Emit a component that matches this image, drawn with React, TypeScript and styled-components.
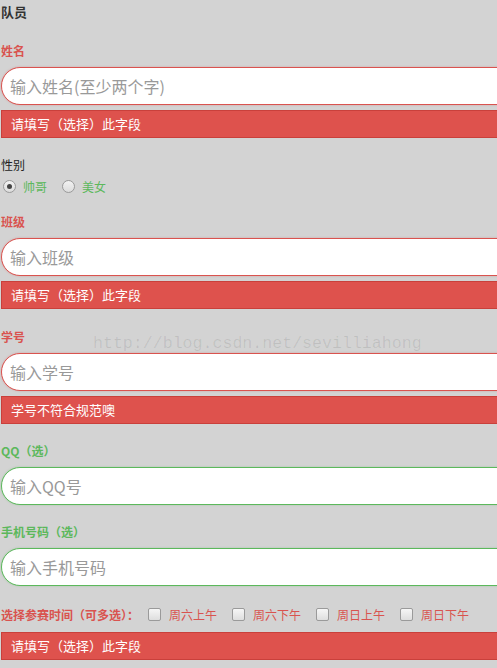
import React from "react"
import styled, { createGlobalStyle } from "styled-components"

const GlobalStyle = createGlobalStyle`
  html, body {
    margin: 0;
    padding: 0;
    background: #d3d3d3;
    overflow: hidden;
  }
  body {
    font-family: "Noto Sans CJK SC", "Noto Sans", sans-serif;
  }
`

const RED = "#d9534f"
const GREEN = "#5cb85c"

const Page = styled.div`
  position: relative;
  width: 497px;
  height: 668px;
  padding-left: 1px;
  box-sizing: border-box;
  overflow: hidden;
`

const Title = styled.div`
  margin-top: 3px;
  height: 18px;
  line-height: 18px;
  font-size: 13px;
  font-weight: bold;
  color: #333;
`

const Group = styled.div<{ $top: number }>`
  margin-top: ${(p) => p.$top}px;
  display: flex;
  flex-direction: column;
`

const Label = styled.label<{ $tone: "red" | "green" | "dark" }>`
  height: 18px;
  line-height: 18px;
  font-size: 12px;
  font-weight: ${(p) => (p.$tone === "dark" ? "normal" : "bold")};
  color: ${(p) => (p.$tone === "red" ? RED : p.$tone === "green" ? GREEN : "#222")};
`

const Input = styled.input<{ $ok?: boolean }>`
  margin-top: 7px;
  width: 560px;
  height: 38px;
  box-sizing: border-box;
  border: 1px solid ${(p) => (p.$ok ? GREEN : RED)};
  border-radius: 19px;
  background: #fff;
  padding: 0 8px;
  font-family: "Noto Sans CJK SC", sans-serif;
  font-size: 16px;
  color: #555;
  outline: none;
  box-shadow: 0 0 2px ${(p) => (p.$ok ? "rgba(92,184,92,0.4)" : "rgba(217,83,79,0.4)")};

  &::placeholder {
    color: #999;
  }
`

const ErrorBar = styled.div<{ $top?: number }>`
  margin-top: ${(p) => p.$top ?? 5}px;
  width: 560px;
  height: 28px;
  box-sizing: border-box;
  border: 1px solid #c9403b;
  background: #de524d;
  color: #fff;
  font-size: 13px;
  line-height: 26px;
  padding-left: 9px;
`

const ChoiceRow = styled.div<{ $top?: number }>`
  margin-top: ${(p) => p.$top ?? 0}px;
  height: 18px;
  display: flex;
  align-items: center;
  font-size: 12px;
`

const Choice = styled.label<{ $color: string; $gap: number }>`
  display: flex;
  align-items: center;
  color: ${(p) => p.$color};
  margin-right: ${(p) => p.$gap}px;
  font-weight: normal;
`

const Radio = styled.span<{ $checked?: boolean }>`
  width: 11px;
  height: 11px;
  border-radius: 50%;
  border: 1px solid #9a9a9a;
  background: linear-gradient(#f2f2f2, #dcdcdc);
  margin: 0 7px 0 2px;
  display: flex;
  align-items: center;
  justify-content: center;

  &::after {
    content: "";
    width: 5px;
    height: 5px;
    border-radius: 50%;
    background: ${(p) => (p.$checked ? "#444" : "transparent")};
  }
`

const Check = styled.span`
  width: 11px;
  height: 11px;
  border-radius: 2px;
  border: 1px solid #9a9a9a;
  background: linear-gradient(#f6f6f6, #dedede);
  margin: 0 8px 0 6px;
`

const TimeTitle = styled.span`
  font-weight: bold;
  color: ${RED};
  margin-right: 3px;
`

const Watermark = styled.div`
  position: absolute;
  left: 93px;
  top: 334px;
  font-family: "Liberation Mono", monospace;
  font-size: 16.6px;
  color: rgba(0, 0, 0, 0.09);
  pointer-events: none;
  white-space: nowrap;
`

const times = ["周六上午", "周六下午", "周日上午", "周日下午"]

export default function App() {
  return (
    <Page>
      <GlobalStyle />
      <Title>队员</Title>

      <Group $top={21}>
        <Label $tone="red">姓名</Label>
        <Input placeholder="输入姓名(至少两个字)" />
        <ErrorBar>请填写（选择）此字段</ErrorBar>
      </Group>

      <Group $top={18}>
        <Label $tone="dark">性别</Label>
        <ChoiceRow $top={3}>
          <Choice $color={GREEN} $gap={13}>
            <Radio $checked />
            帅哥
          </Choice>
          <Choice $color={GREEN} $gap={0}>
            <Radio />
            美女
          </Choice>
        </ChoiceRow>
      </Group>

      <Group $top={18}>
        <Label $tone="red">班级</Label>
        <Input placeholder="输入班级" />
        <ErrorBar>请填写（选择）此字段</ErrorBar>
      </Group>

      <Group $top={19}>
        <Label $tone="red">学号</Label>
        <Input placeholder="输入学号" />
        <ErrorBar>学号不符合规范噢</ErrorBar>
      </Group>

      <Group $top={18}>
        <Label $tone="green">QQ（选）</Label>
        <Input $ok placeholder="输入QQ号" />
      </Group>

      <Group $top={18}>
        <Label $tone="green">手机号码（选）</Label>
        <Input $ok placeholder="输入手机号码" />
      </Group>

      <Group $top={19}>
        <ChoiceRow>
          <TimeTitle>选择参赛时间（可多选）：</TimeTitle>
          {times.map((t) => (
            <Choice key={t} $color={RED} $gap={9}>
              <Check />
              {t}
            </Choice>
          ))}
        </ChoiceRow>
        <ErrorBar $top={9}>请填写（选择）此字段</ErrorBar>
      </Group>

      <Watermark>http://blog.csdn.net/sevilliahong</Watermark>
    </Page>
  )
}
